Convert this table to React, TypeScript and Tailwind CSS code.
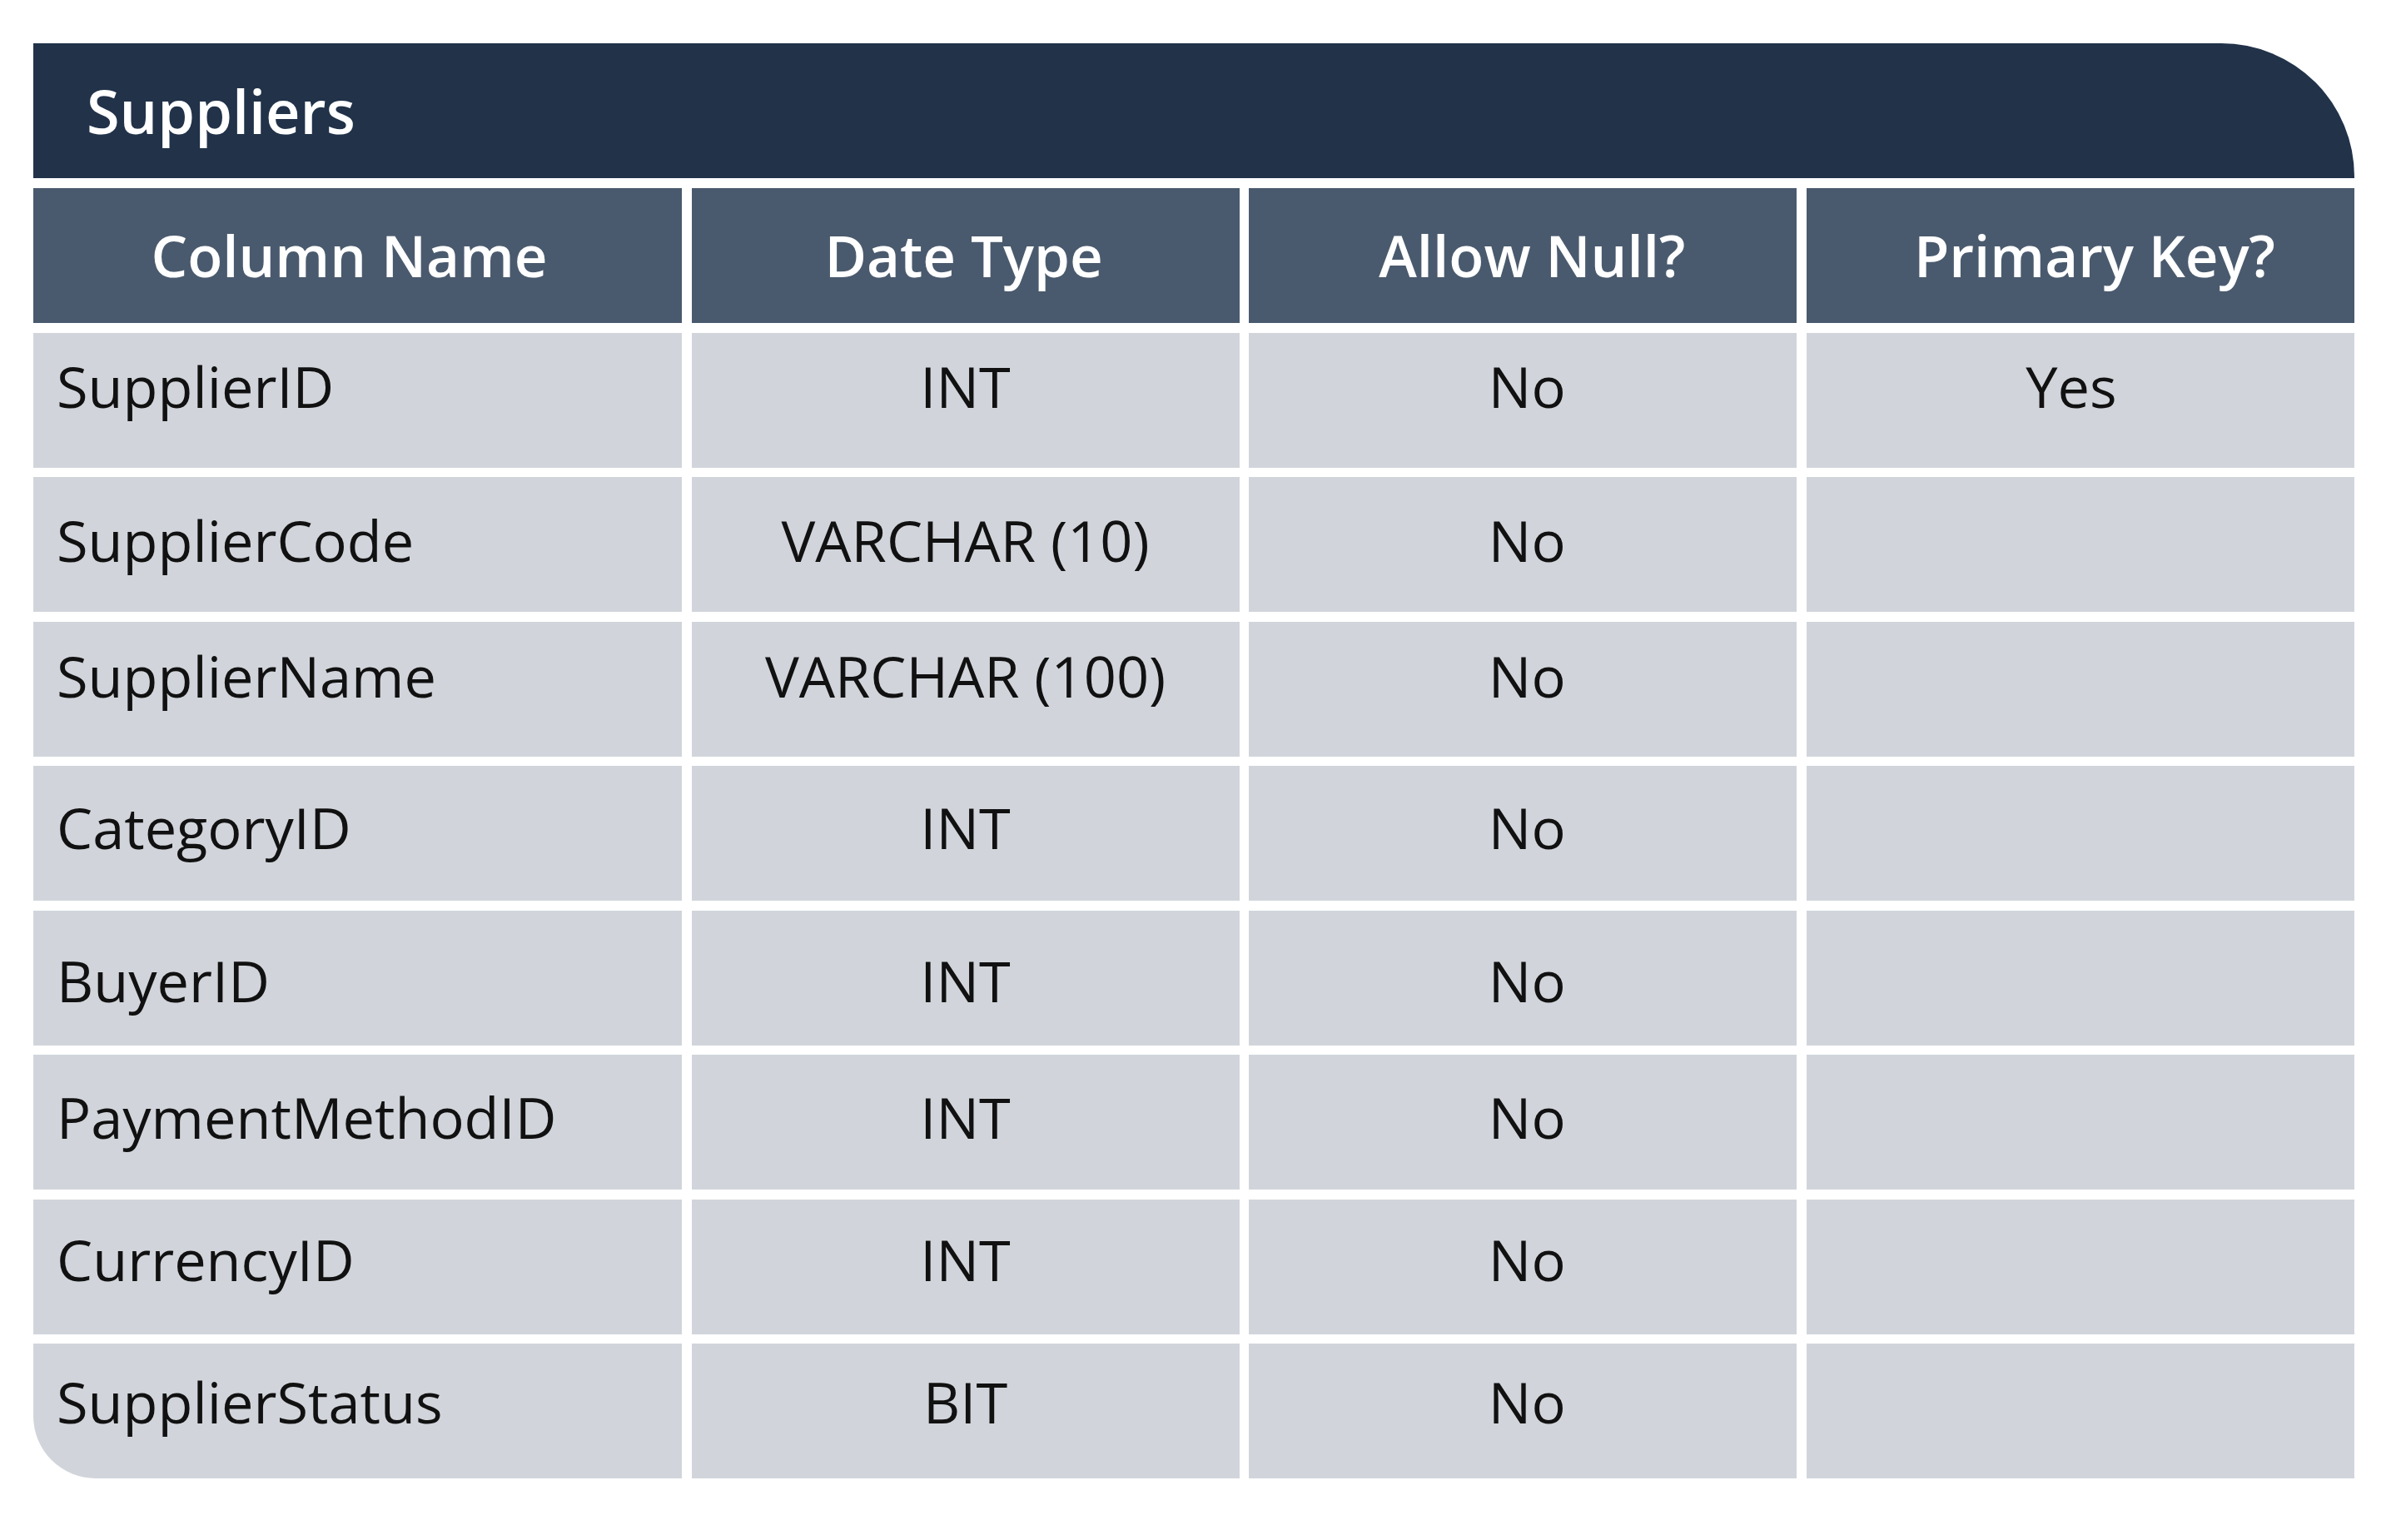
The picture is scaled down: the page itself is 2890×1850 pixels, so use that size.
const rows: { cells: [string, string, string, string]; nudge: string }[] = [
  { cells: ["SupplierID", "INT", "No", "Yes"], nudge: "pb-[32px]" },
  { cells: ["SupplierCode", "VARCHAR (10)", "No", ""], nudge: "pb-[10px]" },
  { cells: ["SupplierName", "VARCHAR (100)", "No", ""], nudge: "pb-[30px]" },
  { cells: ["CategoryID", "INT", "No", ""], nudge: "pb-[13px]" },
  { cells: ["BuyerID", "INT", "No", ""], nudge: "pt-[8px]" },
  { cells: ["PaymentMethodID", "INT", "No", ""], nudge: "pb-[12px]" },
  { cells: ["CurrencyID", "INT", "No", ""], nudge: "pb-[16px]" },
  { cells: ["SupplierStatus", "BIT", "No", ""], nudge: "pb-[21px]" },
];

const headers = [
  { label: "Column Name", pad: "pr-[20px]" },
  { label: "Date Type", pad: "pr-[4px]" },
  { label: "Allow Null?", pad: "pl-[22px]" },
  { label: "Primary Key?", pad: "pl-[34px]" },
];

// horizontal placement of the body cells, column by column
const bodyPad = ["pl-[28px]", "justify-center", "justify-center pl-[10px]", "justify-center pr-[22px]"];

export default function App() {
  return (
    <div
      className="min-h-screen w-[2890px] bg-white pl-[40px] pt-[52px]"
      style={{ fontFamily: '"Open Sans", "Noto Sans", sans-serif' }}
    >
      <div className="w-[2788px]">
        <div className="flex h-[162px] items-center rounded-tr-[160px] bg-[#213249] pl-[64px] text-[72px] font-semibold text-white">
          Suppliers
        </div>

        <div className="mt-[12px] grid grid-cols-[779px_1fr_1fr_1fr] gap-x-[11.5px] gap-y-[11.5px]">
          {headers.map((h) => (
            <div
              key={h.label}
              className={`flex h-[162px] items-center justify-center bg-[#4a5a6e] text-[69px] font-semibold text-white ${h.pad}`}
            >
              {h.label}
            </div>
          ))}

          {rows.map((r, i) => {
            const last = i === rows.length - 1;
            return r.cells.map((cell, j) => (
              <div
                key={`${i}-${j}`}
                className={`flex h-[162px] items-center bg-[#d1d5db] text-[68.5px] text-[#111111] ${bodyPad[j]} ${r.nudge} ${
                  last && j === 0 ? "rounded-bl-[75px]" : ""
                }`}
              >
                {cell}
              </div>
            ));
          })}
        </div>
      </div>
    </div>
  );
}
